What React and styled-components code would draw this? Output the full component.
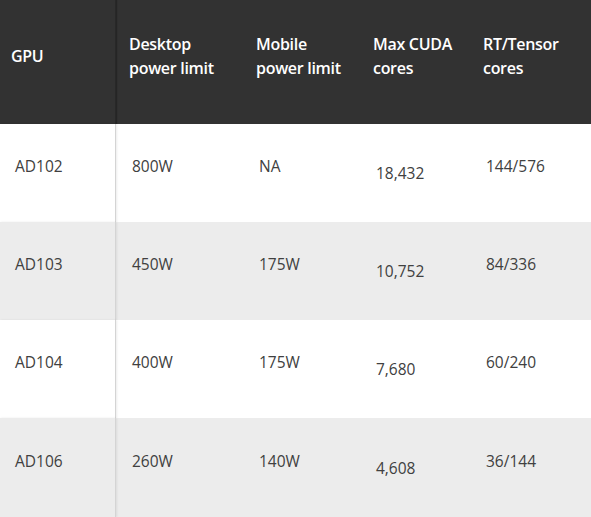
import React from 'react';
import styled, { createGlobalStyle } from 'styled-components';

const GlobalStyle = createGlobalStyle`
    html, body {
        margin: 0;
        padding: 0;
        background: #ffffff;
    }
    body {
        font-family: "Open Sans", "Liberation Sans", sans-serif;
    }
`;

const columns = '116px 127px 117px 110px 1fr';

const rows = [
    { gpu: 'AD102', desktop: '800W', mobile: 'NA', cuda: '18,432', rt: '144/576' },
    { gpu: 'AD103', desktop: '450W', mobile: '175W', cuda: '10,752', rt: '84/336' },
    { gpu: 'AD104', desktop: '400W', mobile: '175W', cuda: '7,680', rt: '60/240' },
    { gpu: 'AD106', desktop: '260W', mobile: '140W', cuda: '4,608', rt: '36/144' },
];

const App = () => {
    return (
        <>
            <GlobalStyle />
            <Table>
                <HeadRow>
                    <HeadCell first>GPU</HeadCell>
                    <HeadCell>Desktop<br />power limit</HeadCell>
                    <HeadCell>Mobile<br />power limit</HeadCell>
                    <HeadCell>Max CUDA<br />cores</HeadCell>
                    <HeadCell>RT/Tensor<br />cores</HeadCell>
                </HeadRow>
                {rows.map((row, index) => (
                    <BodyRow key={row.gpu} striped={index % 2 === 1} last={index === rows.length - 1}>
                        <Cell first>{row.gpu}</Cell>
                        <Cell>{row.desktop}</Cell>
                        <Cell>{row.mobile}</Cell>
                        <Cell centered>{row.cuda}</Cell>
                        <Cell>{row.rt}</Cell>
                    </BodyRow>
                ))}
            </Table>
        </>
    )
};
export default App


const Table = styled.div`
    width: 591px;
    display: flex;
    flex-direction: column;
`;

const HeadRow = styled.div`
    display: grid;
    grid-template-columns: ${columns};
    height: 124px;
    background: #323232;
`;

const HeadCell = styled.div`
    display: flex;
    align-items: center;
    padding: 0 0 12px 13px;
    color: #ffffff;
    font-size: 16px;
    font-weight: 600;
    line-height: 24px;
    letter-spacing: -0.3px;
    ${(p) => p.first && `
        padding-left: 11px;
        border-right: 1px solid #282828;
        box-shadow: 1px 0 1px rgba(0, 0, 0, 0.25);
    `}
`;

const BodyRow = styled.div`
    display: grid;
    grid-template-columns: ${columns};
    height: ${(p) => (p.last ? 99 : 98)}px;
    background: ${(p) => (p.striped ? '#ececec' : '#ffffff')};
`;

const Cell = styled.div`
    display: flex;
    align-items: center;
    padding: ${(p) => (p.centered ? '0 0 0 16px' : '0 0 14px 16px')};
    color: #404040;
    font-size: 15.5px;
    line-height: 22px;
    ${(p) => p.first && `
        padding-left: 15px;
        border-right: 1px solid #d4d4d4;
        box-shadow: 1px 0 2px rgba(0, 0, 0, 0.08);
    `}
`;
